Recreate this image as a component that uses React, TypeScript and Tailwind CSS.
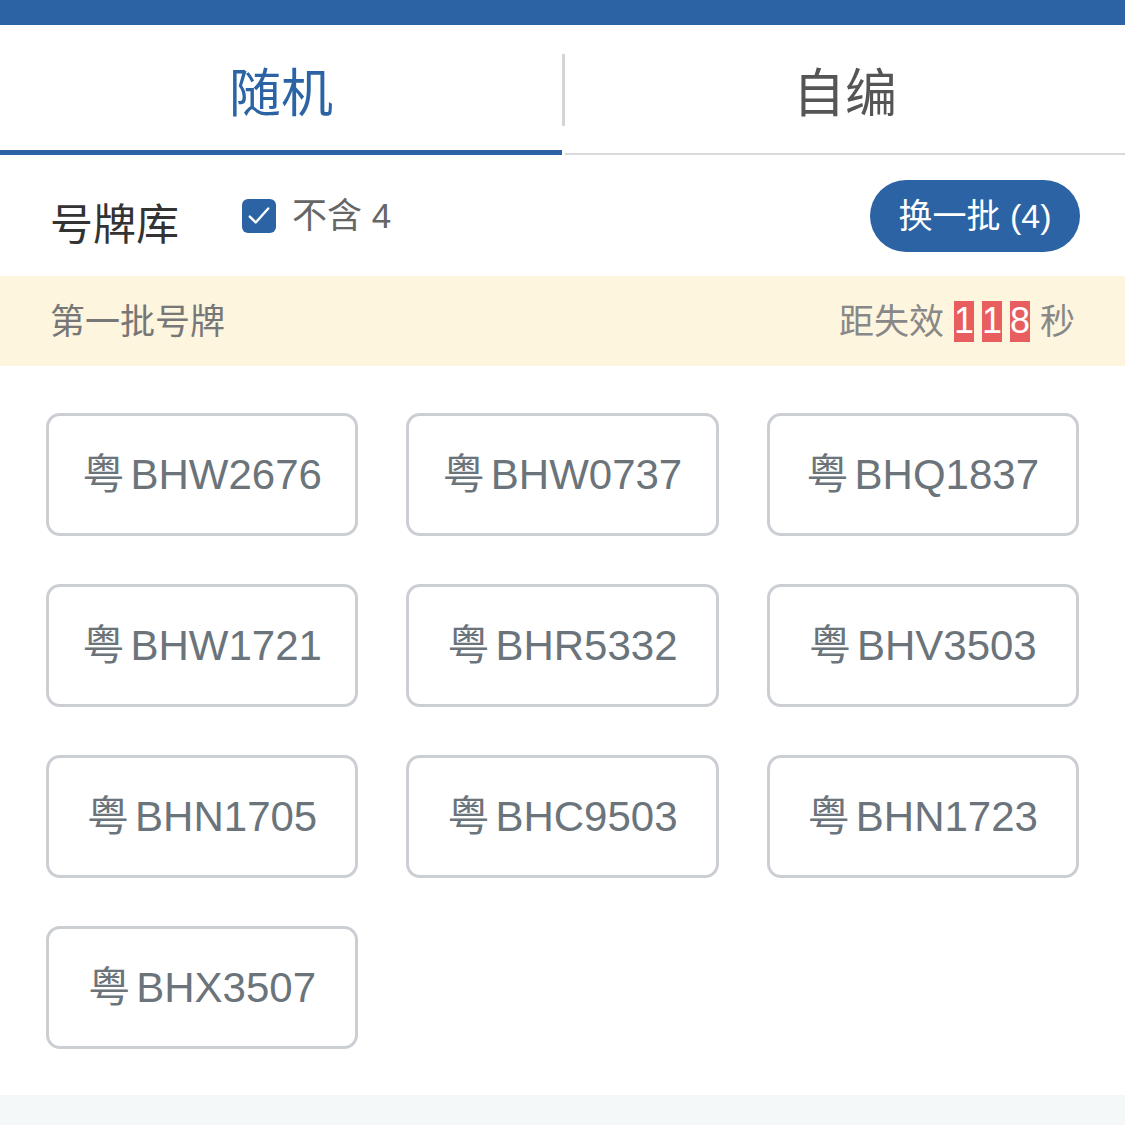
import React, { useState } from "react";

const FONT = { fontFamily: '"Liberation Sans", "Noto Sans CJK SC", sans-serif' };

const plates = [
  "BHW2676",
  "BHW0737",
  "BHQ1837",
  "BHW1721",
  "BHR5332",
  "BHV3503",
  "BHN1705",
  "BHC9503",
  "BHN1723",
  "BHX3507",
];

export default function App() {
  const [tab, setTab] = useState<"random" | "custom">("random");
  const [noFour, setNoFour] = useState(true);
  const countdown = "118";

  return (
    <div className="flex h-[1125px] w-full flex-col bg-white" style={FONT}>
      <div className="h-[25px] bg-[#2c63a4]" />

      {/* Tabs */}
      <div className="flex h-[130px] items-center">
        <button
          onClick={() => setTab("random")}
          className="flex h-full w-[562px] items-center justify-center border-b-[5px] border-[#2c63a4] pt-[12px] text-[52px] text-[#2c63a4]"
        >
          随机
        </button>
        <div className="h-[72px] w-[3px] bg-[#d4d4d4]" />
        <button
          onClick={() => setTab("custom")}
          className="flex h-full flex-1 items-center justify-center border-b-[2px] border-[#d9d9d9] pt-[9px] text-[52px] text-[#555555]"
        >
          自编
        </button>
      </div>

      {/* Plate pool header */}
      <div className="flex h-[121px] items-center pl-[50px] pr-[45px]">
        <span className="mt-[20px] text-[43px] leading-none text-[#333333]">号牌库</span>
        <label className="ml-[63px] flex cursor-pointer items-center">
          <input
            type="checkbox"
            className="hidden"
            checked={noFour}
            onChange={(e) => setNoFour(e.target.checked)}
          />
          <span
            className={
              noFour
                ? "flex h-[34px] w-[34px] items-center justify-center rounded-[6px] bg-[#2c63a4]"
                : "flex h-[34px] w-[34px] items-center justify-center rounded-[6px] border-2 border-[#999999] bg-white"
            }
          >
            {noFour && (
              <svg width="26" height="26" viewBox="0 0 24 24" fill="none">
                <path d="M3.5 12.5l5.5 5.5L20.5 5" stroke="white" strokeWidth="2.2" strokeLinecap="round" strokeLinejoin="round" />
              </svg>
            )}
          </span>
          <span className="ml-[16px] text-[35px] leading-none text-[#666666]">不含 4</span>
        </label>
        <button className="ml-auto flex h-[72px] w-[210px] items-center justify-center rounded-full bg-[#2c63a4] text-[34px] leading-none text-white">
          换一批 (4)
        </button>
      </div>

      {/* Batch bar */}
      <div className="flex h-[90px] items-center justify-between bg-[#fdf5de] px-[50px]">
        <span className="text-[35px] leading-none text-[#777777]">第一批号牌</span>
        <div className="flex items-center text-[35px] leading-none text-[#888888]">
          <span>距失效</span>
          <div className="ml-[10px] flex gap-[8px]">
            {countdown.split("").map((d, i) => (
              <span
                key={i}
                className="flex h-[41px] min-w-[19px] items-center justify-center bg-[#e85d5d] text-[36px] leading-none text-white"
              >
                {d}
              </span>
            ))}
          </div>
          <span className="ml-[10px]">秒</span>
        </div>
      </div>

      {/* Plates */}
      <div className="grid grid-cols-3 gap-x-[48px] gap-y-[48px] px-[46px] pt-[47px]">
        {plates.map((p) => (
          <div
            key={p}
            className="flex h-[123px] items-center justify-center rounded-[14px] border-[3px] border-[#cbcfd3] text-[42px] leading-none text-[#6b737b]"
          >
            <span className="mr-[6px]">粤</span>
            <span>{p}</span>
          </div>
        ))}
      </div>

      <div className="mt-auto h-[30px] bg-[#f5f8f9]" />
    </div>
  );
}
